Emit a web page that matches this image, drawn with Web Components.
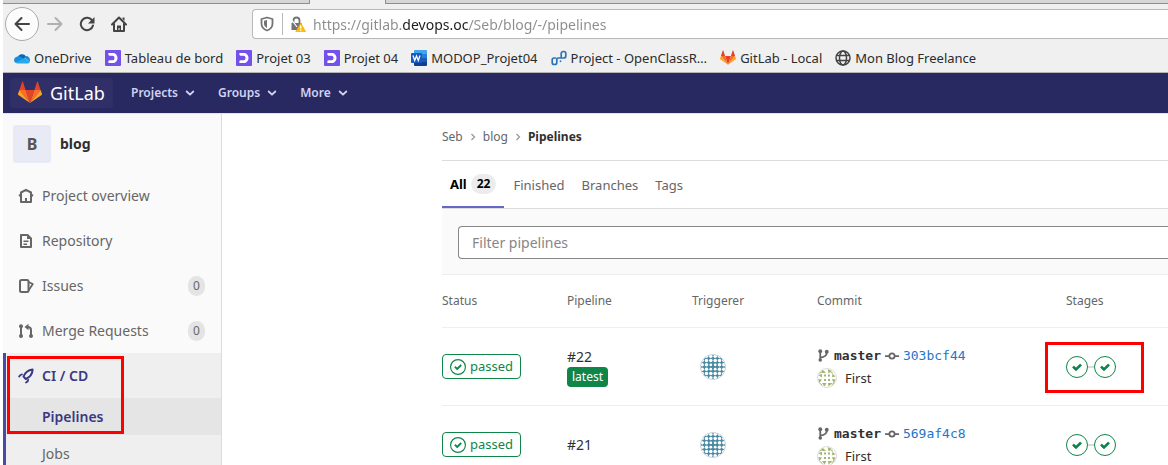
<!DOCTYPE html>
<html lang="en">
<head>
<meta charset="utf-8">
<title>Pipelines · Seb / blog · GitLab</title>
<style>
  html, body { height: 100%; margin: 0; overflow: hidden; }
  body { background: #fff; font: 14px/20px "Noto Sans", "Open Sans", sans-serif; color: #303030; }
</style>
</head>
<body>
<app-shell>
  <browser-chrome slot="chrome"></browser-chrome>
  <gl-navbar slot="navbar"></gl-navbar>
  <gl-sidebar slot="sidebar"></gl-sidebar>
  <gl-pipelines></gl-pipelines>
</app-shell>

<script>
const define = (name, html, init) => {
  const tpl = document.createElement('template');
  tpl.innerHTML = '<style>*{box-sizing:border-box}a{color:inherit;text-decoration:none}svg{display:block}</style>' + html;
  customElements.define(name, class extends HTMLElement {
    constructor() {
      super();
      this.attachShadow({ mode: 'open' }).append(tpl.content.cloneNode(true));
    }
    connectedCallback() {
      if (init && !this.ready) { this.ready = true; init(this, this.shadowRoot); }
    }
  });
};

/* Identicon artwork: light spots on a teal lattice */
const tealSpots = () => {
  const at = [2.2, 6.5, 10.8, 15.2, 19.5, 23.8];
  let s = '';
  at.forEach((y, j) => at.forEach((x, i) => {
    const inner = (i === 2 || i === 3) && (j === 2 || j === 3);
    s += `<circle cx="${x}" cy="${y}" r="${inner ? 1.4 : 1.75}"/>`;
  }));
  return s;
};

const TANUKI = `<path fill="#e24329" d="M12 22.1 16.4 8.9H7.6z"/><path fill="#fc6d26" d="M12 22.1 7.6 8.9H1.4zM12 22.1 16.4 8.9h6.2z"/><path fill="#fca326" d="M1.4 8.9 0 13a1 1 0 0 0 .4 1L12 22.1zM22.6 8.9 24 13a1 1 0 0 1-.4 1L12 22.1z"/><path fill="#e24329" d="M1.4 8.9h6.2L5 .9c-.2-.4-.8-.4-.9 0zM22.6 8.9h-6.2l2.6-8c.2-.4.8-.4.9 0z"/>`;
const TICK = 'M6.278 7.697L5.045 6.464a.296.296 0 0 0-.42-.002l-.613.614a.298.298 0 0 0 .002.42l1.91 1.909a.5.5 0 0 0 .703.005l.265-.265L9.997 6.04a.291.291 0 0 0-.009-.408l-.614-.614a.29.29 0 0 0-.408-.009L6.278 7.697z';
const S = 'fill="none" stroke="currentColor"';

const ICONS = {
  back: [16, `<path ${S} stroke-width="2" stroke-linecap="round" stroke-linejoin="round" d="M15 8H1.5M7.5 2 1.5 8l6 6"/>`],
  forward: [16, `<path ${S} stroke-width="2" stroke-linecap="round" stroke-linejoin="round" d="M1 8h13.5M8.5 2l6 6-6 6"/>`],
  reload: [16, `<path ${S} stroke-width="2" stroke-linecap="round" d="M13.3 4.8A6.2 6.2 0 1 0 14 9.5"/><path fill="currentColor" d="M15.5 1v6.5H9z"/>`],
  house: [16, `<path ${S} stroke-width="2" stroke-linecap="round" stroke-linejoin="round" d="M1 8.5 8 1.5l7 7M3 8v7h10V8"/><path fill="currentColor" d="M6 14V9.5h4V14H8.6v-2H7.5v2zM11.5 1.5h2V5l-2-2z"/>`],
  shield: [16, `<path ${S} stroke-width="1.8" stroke-linejoin="round" d="M8 1.5 13.5 3v4.500c0 3.500-2.500 6-5.500 7-3-1-5.500-3.500-5.500-7V3z"/><path fill="currentColor" d="M8 4 5 4.800v3c0 2 1.300 3.500 3 4.300z"/>`],
  lock: [16, `<path ${S} stroke-width="1.8" d="M3.5 8V4.500a3 3 0 0 1 6 0V8"/><path fill="currentColor" d="M1.5 7h10v7h-10z"/><path stroke="#fff" stroke-width="1.2" d="M1 3 7 11"/><path fill="#ffbf00" stroke="#e9a200" stroke-width=".6" stroke-linejoin="round" d="m10.7 6.800 4.900 9H5.800z"/><path stroke="#fff" stroke-width="1.4" d="M10.7 9.500v3M10.7 13.500v1.300"/>`],
  onedrive: [16, `<path fill="#0f62b5" d="M3.500 8A4.600 4.600 0 0 1 12 6.500L9.500 10z"/><path fill="#1490df" d="M3.500 6.500a3.500 3.500 0 0 0-2 6.300L11 9.500 6.500 6.800a4 4 0 0 0-3-.3z"/><path fill="#1490df" d="M10 7.500 12 6c2.300 0 4 1.700 4 4 0 .8 0 1-.3 1.600z"/><path fill="#28a8ea" d="M1.500 12.700 10.500 8l5.300 3.500c0 1.300-1 2-2 2H3.500c-.8 0-1.500-.3-2-.8z"/>`],
  openclass: [16, `<rect width="16" height="16" rx="1" fill="#7451eb"/><path fill="#fff" d="M3.500 3h4.200c2.800 0 4.800 2.100 4.800 5s-2 5-4.800 5H3.500c-.5-1.500 0-2.500 1.200-2.700h2.800c1.200 0 2-.9 2-2.300s-.8-2.300-2-2.300H4.700C3.500 5.500 3 4.500 3.500 3z"/>`],
  word: [16, `<path fill="#41a5ee" d="M4 0h11a1 1 0 0 1 1 1v4H3V1a1 1 0 0 1 1-1z"/><path fill="#2b7cd3" d="M3 4h13v4.500H3z"/><path fill="#185abd" d="M3 8h13v4H3z"/><path fill="#103f91" d="M3 12h13v3a1 1 0 0 1-1 1H4a1 1 0 0 1-1-1z"/><rect y="3" width="11" height="10" rx="1" fill="#185abd"/><path fill="none" stroke="#fff" stroke-width="1.3" d="m2 5.500 1.700 5L5.500 6l1.800 4.500L9 5.500"/>`],
  flow: [16, `<g fill="none" stroke="#2c74b5" stroke-width="1.7" stroke-linecap="round" stroke-linejoin="round"><path d="M4.500 8H3.200a2 2 0 0 0-2 2v2.500a2 2 0 0 0 2 2h.6a2 2 0 0 0 2-2V9.500A1.500 1.500 0 0 1 7.300 8H12.800a2 2 0 0 0 2-2V3.500a2 2 0 0 0-2-2h-.6a2 2 0 0 0-2 2V8M9.500 11v.3"/></g>`],
  tanuki: [24, TANUKI],
  globe: [16, `<g ${S} stroke-width="1.5"><circle cx="8" cy="8" r="7"/><ellipse cx="8" cy="8" rx="3.5" ry="7"/><path d="M1.500 5.500h13M1.500 10.500h13"/></g>`],
  chevron: [10, `<path ${S} stroke-width="1.8" stroke-linecap="round" stroke-linejoin="round" d="m1.700 3.500 3.300 3.200 3.300-3.200"/>`],
  angle: [8, `<path ${S} stroke-width="1.3" d="m2.500 1 3 3-3 3"/>`],
  home: [16, `<path ${S} stroke-width="2" stroke-linejoin="round" d="M.8 7.500 3 7V4.500l5-2.700 5 2.700V7l2.200.5M3 6v8h10V6"/><path fill="currentColor" d="M7 10h2v4H7z"/>`],
  doc: [16, `<path ${S} stroke-width="2" stroke-linejoin="round" d="M3 2h6.500L13 5.500V14H3z"/><path fill="currentColor" d="M9 2l4 4H9zM5.500 7.500h5V9h-5zM5.500 10.500H9V12H5.500z"/>`],
  issues: [16, `<rect x="2" y="2" width="8.5" height="12" rx="1.5" ${S} stroke-width="2"/><path ${S} stroke-width="1.8" stroke-linejoin="round" d="m10.500 4 4.300 2-4.300 6.500"/>`],
  merge: [16, `<path ${S} stroke-width="2" d="M3 4v9M13 13V7c0-2-1.200-3-3.500-3"/><g fill="currentColor"><circle cx="3" cy="3.2" r="2"/><circle cx="3" cy="13" r="2"/><circle cx="13" cy="13" r="2"/><path d="M6.500 4 10.500.8v6.500z"/></g>`],
  rocket: [16, `<path ${S} stroke-width="2" stroke-linejoin="round" d="M5.500 8.500C7 4.500 10 2 14.600 1.400 14.500 5.500 12 9 7.800 11z"/><path ${S} stroke-width="1.8" stroke-linecap="round" d="M1.200 8.500C2 7 3 6.300 4 6.300M8 14.500c1.200-.5 2-1.500 2.200-2.500"/>`],
  branch: [16, `<path ${S} stroke-width="2.2" d="M4 3v10M4 10.500c4-.5 8-1.500 8-6"/><g fill="currentColor"><circle cx="4" cy="2.8" r="2.4"/><circle cx="4" cy="13.5" r="2.2"/><circle cx="12" cy="3.3" r="2.4"/></g>`],
  commit: [16, `<circle cx="8" cy="8" r="3" ${S} stroke-width="2"/><path ${S} stroke-width="2" d="M0 8h5M11 8h5"/>`],
  passed: [14, `<circle cx="7" cy="7" r="6.5" ${S}/><path fill="currentColor" stroke="currentColor" stroke-width=".3" d="${TICK}"/>`],
  tick: [14, `<path fill="currentColor" stroke="currentColor" stroke-width=".5" d="${TICK}"/>`],
  teal: [26, `<circle cx="13" cy="13" r="12.5" fill="#4a8aa2"/><clipPath id="c"><circle cx="13" cy="13" r="12.5"/></clipPath><g clip-path="url(#c)" fill="#fff">${tealSpots()}</g><circle cx="13" cy="13" r="12.5" fill="none" stroke="#d5dde0"/>`],
  olive: [20, `<g fill="#a3b56e"><path d="M7 6.500h2v2H7zM11 6.500h2v2h-2zM7 11h2v2H7zM11 11h2v2h-2z"/><path d="M5.500 1.500 9 5H4.500zM10.700 1 15 3l-3.500 2.500zM1 7l4-1v3.500zM1 11l4 .5-2.500 3.500zM15.500 5.500l3 3-3.500.8zM15 11l4 .5-2.500 3.500zM5 15h4.500l-2 3.500zM11 15h4.500l-4 3.500z"/></g><g fill="none" stroke="#a3b56e"><path d="M2.500 5.500 5.500 3M2.500 15l3 2.500M14.500 17l3-2.500M14 4.500l2 .5"/></g><circle cx="10" cy="10" r="9.5" fill="none" stroke="#ddd"/>`]
};

/* <ui-icon name size> */
define('ui-icon', `<style>:host{display:block;flex:none}</style><span></span>`, (el, root) => {
  const [box, art] = ICONS[el.getAttribute('name')];
  const n = el.getAttribute('size') || box;
  root.querySelector('span').innerHTML = `<svg aria-hidden="true" width="${n}" height="${n}" viewBox="0 0 ${box} ${box}">${art}</svg>`;
});

define('app-shell', `
<style>
  :host { display: flex; flex-direction: column; height: 100vh; padding-left: 3px; box-sizing: border-box; overflow: hidden; }
  .body { display: flex; flex: 1; min-height: 0; border-top: 1px solid #e3e3ea; }
  main { flex: 1; min-width: 0; }
</style>
<slot name="chrome"></slot>
<slot name="navbar"></slot>
<div class="body"><slot name="sidebar"></slot><main><slot></slot></main></div>`);

define('bookmark-link', `
<style>
  :host { display: block; flex: none; }
  a { display: flex; align-items: center; gap: 4px; font-size: 13px; line-height: 20px; color: #2b2b2b; }
  i { color: #444; }
</style>
<a href="#"><i></i><span><slot></slot></span></a>`, (el, root) => {
  root.querySelector('i').innerHTML = `<ui-icon name="${el.getAttribute('icon')}" size="16"></ui-icon>`;
});

/* Browser window: tab strip edge, toolbar, bookmarks */
define('browser-chrome', `
<style>
  :host { display: block; background: #f0f0f0; border-bottom: 1px solid #b4b4b4; }
  .tabs { display: flex; height: 4px; }
  .tabs i { background: #d6d6d6; border-bottom: 1px solid #8f8f8f; }
  .first { width: 307px; border-right: 1px solid #8f8f8f; }
  .open { width: 75px; }
  .rest { flex: 1; border-left: 1px solid #8f8f8f; }
  .bar { display: flex; align-items: center; height: 40px; padding-left: 2px; }
  button { display: grid; place-items: center; border: 0; padding: 0; background: none; color: #444; width: 32px; height: 34px; }
  .back { width: 34px; border: 1px solid #aaa; border-radius: 50%; background: #fcfcfc; }
  .next { color: #b0b0b0; }
  .url { display: flex; align-items: center; flex: 1; height: 30px; margin-left: 117px; padding-left: 6px; gap: 7px;
         background: #fff; border: 1px solid #b9b9b9; border-right: 0; border-radius: 4px 0 0 4px; color: #737373; }
  .url hr { width: 1px; height: 22px; margin: 0; border: 0; background: #bbb; }
  input { flex: 1; min-width: 0; border: 0; padding: 0; outline: 0; font: inherit; font-size: 14px; height: 24px;
          color: transparent; -webkit-text-fill-color: transparent;
          background: linear-gradient(90deg, #8c8c8c 89px, #1c1c1c 89px 156px, #8c8c8c 156px); -webkit-background-clip: text; background-clip: text; }
  nav { display: flex; gap: 13px; padding: 4px 11px; }
</style>
<div class="tabs"><i class="first"></i><span class="open"></span><i class="rest"></i></div>
<div class="bar">
  <button class="back" aria-label="Back"><ui-icon name="back" size="16"></ui-icon></button>
  <button class="next" aria-label="Forward"><ui-icon name="forward" size="16"></ui-icon></button>
  <button aria-label="Reload"><ui-icon name="reload" size="16"></ui-icon></button>
  <button aria-label="Home"><ui-icon name="house" size="16"></ui-icon></button>
  <div class="url">
    <ui-icon name="shield" size="16"></ui-icon><hr><ui-icon name="lock" size="16"></ui-icon>
    <input type="text" aria-label="Address" value="https://gitlab.devops.oc/Seb/blog/-/pipelines">
  </div>
</div>
<nav>
  <bookmark-link icon="onedrive">OneDrive</bookmark-link>
  <bookmark-link icon="openclass">Tableau de bord</bookmark-link>
  <bookmark-link icon="openclass">Projet 03</bookmark-link>
  <bookmark-link icon="openclass">Projet 04</bookmark-link>
  <bookmark-link icon="word">MODOP_Projet04</bookmark-link>
  <bookmark-link icon="flow">Project - OpenClassR…</bookmark-link>
  <bookmark-link icon="tanuki">GitLab - Local</bookmark-link>
  <bookmark-link icon="globe">Mon Blog Freelance</bookmark-link>
</nav>`);

define('gl-navbar', `
<style>
  :host { display: flex; align-items: center; height: 40px; padding-left: 7px; background: #292961; color: #d1d1f0; }
  .brand { display: flex; align-items: center; gap: 8px; width: 103px; height: 30px; padding-left: 8px; margin-right: 18px;
           border-radius: 4px; background: #302f68; color: #fff; font-size: 18px; }
  button { display: flex; align-items: center; gap: 7px; border: 0; padding: 0; margin-right: 23px; background: none; color: inherit;
           font: inherit; font-size: 12px; font-weight: 600; line-height: 20px; }
</style>
<a class="brand" href="#"><ui-icon name="tanuki" size="24"></ui-icon>GitLab</a>
<button>Projects<ui-icon name="chevron" size="10"></ui-icon></button>
<button>Groups<ui-icon name="chevron" size="10"></ui-icon></button>
<button>More<ui-icon name="chevron" size="10"></ui-icon></button>`);

define('highlight-box', `
<style>:host { position: absolute; box-sizing: border-box; border: 3px solid #f00; pointer-events: none; }</style>`);

define('side-item', `
<style>
  :host { display: block; color: #666; }
  a { display: flex; align-items: center; gap: 8px; height: 45px; padding: 0 16px 0 15px; }
  :host([active]) { color: #393982; font-weight: 600; }
  :host([active]) a { padding-left: 12px; }
  b { margin-left: auto; min-width: 17px; border-radius: 10px; background: #e4e4e4; text-align: center; font-weight: 400; font-size: 12px; line-height: 20px; }
  b[hidden] { display: none; }
</style>
<a href="#"><slot name="icon"></slot><slot></slot><b hidden></b></a>`, (el, root) => {
  if (el.hasAttribute('count')) {
    const b = root.querySelector('b');
    b.textContent = el.getAttribute('count');
    b.hidden = false;
  }
});

define('gl-sidebar', `
<style>
  :host { display: block; flex: none; width: 219px; box-sizing: border-box; background: #fafafa; border-right: 1px solid #dcdcdc; }
  .project { display: flex; align-items: center; gap: 9px; height: 59px; padding-left: 10px; font-weight: 700; color: #2e2e2e; }
  .avatar { display: grid; place-items: center; width: 38px; height: 38px; border-radius: 3px; background: #e8eaf6; color: #555; font-size: 16px; }
  .group { position: relative; border-left: 3px solid #4b4ba3; background: #efefef; }
  .sub { display: block; padding-left: 36px; line-height: 37px; color: #666; }
  .sub.on { background: #e5e5e5; color: #393982; font-weight: 600; }
  highlight-box { left: 1px; top: 3px; width: 117px; height: 78px; }
</style>
<a class="project" href="#"><span class="avatar">B</span>blog</a>
<side-item><ui-icon slot="icon" name="home"></ui-icon>Project overview</side-item>
<side-item><ui-icon slot="icon" name="doc"></ui-icon>Repository</side-item>
<side-item count="0"><ui-icon slot="icon" name="issues"></ui-icon>Issues</side-item>
<side-item count="0"><ui-icon slot="icon" name="merge"></ui-icon>Merge Requests</side-item>
<div class="group">
  <side-item active><ui-icon slot="icon" name="rocket"></ui-icon>CI / CD</side-item>
  <a class="sub on" href="#">Pipelines</a>
  <a class="sub" href="#">Jobs</a>
  <highlight-box></highlight-box>
</div>`);

define('status-badge', `
<style>
  a { display: inline-flex; align-items: center; gap: 4px; padding: 0 7px; border: 1px solid #108548; border-radius: 4px; color: #108548; line-height: 23px; vertical-align: middle; font-size: 13px; }
</style>
<a href="#"><ui-icon name="passed" size="16"></ui-icon><slot></slot></a>`);

define('commit-info', `
<style>
  :host { display: block; color: #303030; }
  div { display: flex; align-items: center; height: 22px; }
  .ref { gap: 4px; font: 13px/20px "DejaVu Sans Mono", monospace; }
  .ref ui-icon { color: #666; }
  .ref a:first-of-type { font-weight: 700; }
  .ref a:last-of-type { color: #1f75cb; }
  .msg { gap: 8px; font-size: 13px; }
</style>
<div class="ref"><ui-icon name="branch" size="13"></ui-icon><a href="#"><slot name="branch"></slot></a><ui-icon name="commit" size="14"></ui-icon><a href="#"><slot name="sha"></slot></a></div>
<div class="msg"><ui-icon name="olive" size="20"></ui-icon><a href="#"><slot></slot></a></div>`);

define('stage-graph', `
<style>
  :host { position: relative; display: inline-flex; align-items: center; vertical-align: middle; }
  button { display: grid; place-items: center; width: 22px; height: 22px; padding: 0; border: 1px solid #108548; border-radius: 50%; background: #fff; color: #108548; }
  i { width: 6px; height: 2px; background: #dbdbdb; }
</style>
<button aria-label="Stage 1: passed"><ui-icon name="tick" size="20"></ui-icon></button><i></i>
<button aria-label="Stage 2: passed"><ui-icon name="tick" size="20"></ui-icon></button>
<slot></slot>`);

define('pipeline-table', `
<style>
  :host { display: block; }
  table { width: 100%; border-collapse: collapse; table-layout: fixed; }
  th, td { padding: 0; text-align: left; border-bottom: 1px solid #eee; }
  th { height: 52px; font-size: 12px; font-weight: 400; color: #666; }
  td { height: 78px; padding-top: 1px; }
  .c { width: 125px; }
  .wide { width: 249px; }
  .avatar { display: inline-block; vertical-align: middle; margin-left: 8px; }
  .id { display: block; }
  .tag { display: inline-block; padding: 0 5px; border-radius: 4px; background: #108548; color: #fff; font-size: 12px; line-height: 20px; vertical-align: top; }
  highlight-box { left: -21px; top: -14px; width: 99px; height: 51px; }
</style>
<table>
  <thead><tr><th class="c">Status</th><th class="c">Pipeline</th><th class="c">Triggerer</th><th class="wide">Commit</th><th>Stages</th></tr></thead>
  <tbody></tbody>
</table>`, (el, root) => {
  const rows = [
    { id: '#22', latest: true, sha: '303bcf44', marked: true },
    { id: '#21', sha: '569af4c8' }
  ];
  root.querySelector('tbody').innerHTML = rows.map(r => `<tr>
    <td><status-badge>passed</status-badge></td>
    <td><a class="id" href="#">${r.id}</a>${r.latest ? '<span class="tag">latest</span>' : ''}</td>
    <td><a class="avatar" href="#" aria-label="Seb"><ui-icon name="teal"></ui-icon></a></td>
    <td><commit-info><span slot="branch">master</span><span slot="sha">${r.sha}</span>First</commit-info></td>
    <td><stage-graph>${r.marked ? '<highlight-box></highlight-box>' : ''}</stage-graph></td></tr>`).join('');
});

define('gl-pipelines', `
<style>
  :host { display: block; margin-left: 220px; }
  .crumbs { display: flex; align-items: center; gap: 6px; height: 47px; border-bottom: 1px solid #dbdbdb; font-size: 12px; color: #666; }
  .crumbs ui-icon { color: #999; }
  .crumbs b { color: #303030; }
  .tabs { display: flex; gap: 1px; height: 48px; border-bottom: 1px solid #dbdbdb; font-size: 13px; color: #666; }
  .tabs a { display: flex; align-items: center; gap: 4px; padding: 0 8px; height: 47px; }
  .tabs .on { border-bottom: 2px solid #6666c4; color: #000; font-weight: 700; }
  .count { padding: 0 6px; border-radius: 10px; background: #ececec; font-size: 12px; line-height: 20px; }
  .filter { padding: 17px 0 15px 16px; background: #fafafa; border-bottom: 1px solid #eee; }
  input { display: block; width: 100%; height: 33px; padding: 0 13px; border: 1px solid #868686; border-right: 0; border-radius: 4px 0 0 4px; background: #fff; font: inherit; font-size: 14px; }
  input::placeholder { color: #868686; opacity: 1; }
</style>
<nav class="crumbs"><a href="#">Seb</a><ui-icon name="angle" size="8"></ui-icon><a href="#">blog</a><ui-icon name="angle" size="8"></ui-icon><b>Pipelines</b></nav>
<nav class="tabs"><a class="on" href="#">All <span class="count">22</span></a><a href="#">Finished</a><a href="#">Branches</a><a href="#">Tags</a></nav>
<div class="filter"><input type="text" aria-label="Filter pipelines" placeholder="Filter pipelines"></div>
<pipeline-table></pipeline-table>`);
</script>
</body>
</html>
